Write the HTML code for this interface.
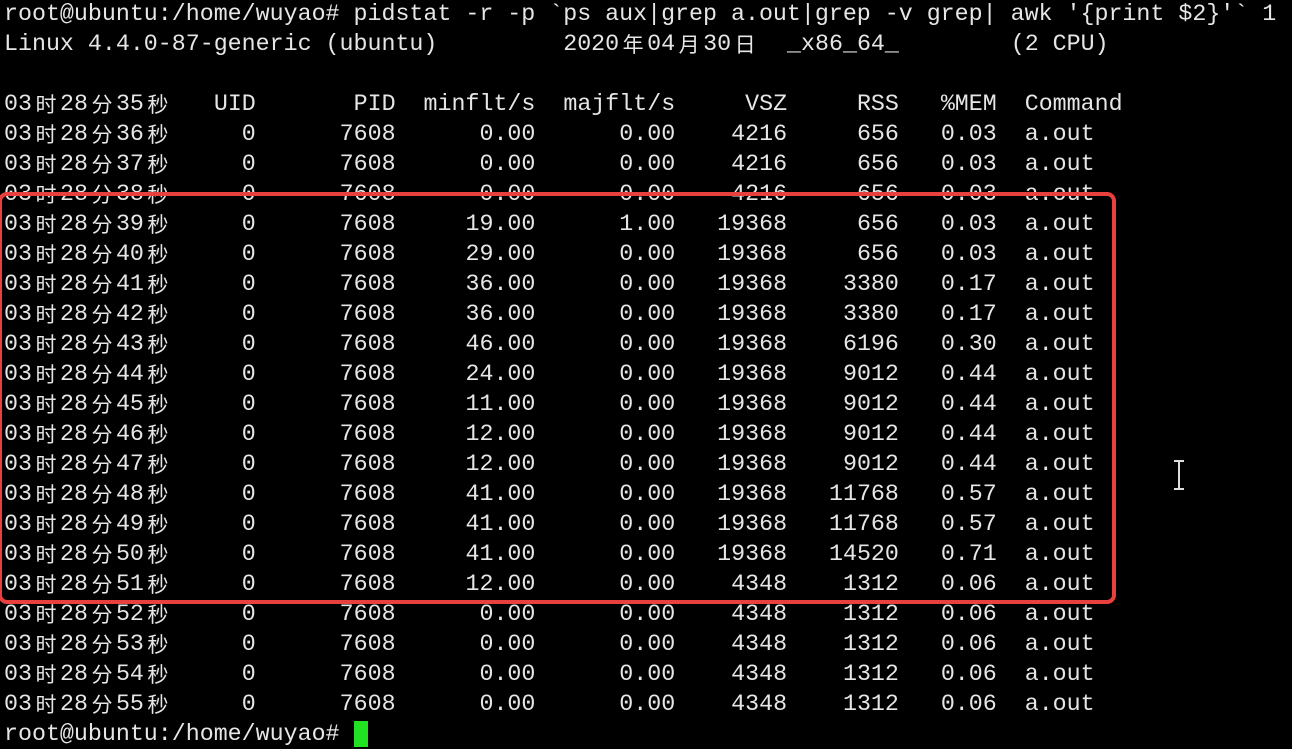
<!DOCTYPE html>
<html><head><meta charset="utf-8"><style>
html,body{margin:0;padding:0;background:#000;width:1292px;height:748px;overflow:hidden}
pre{margin:0;position:absolute;left:4px;top:-1px;font-family:"Liberation Mono",monospace;font-size:23.3px;line-height:30px;color:#e6e6e6;white-space:pre}
.c{display:inline-block;width:28px;height:30px;line-height:30px;vertical-align:top;text-align:center;font-family:"Noto Sans CJK SC",sans-serif;font-size:21px;overflow:hidden}
.box{position:absolute;left:-2px;top:192px;width:1110px;height:404px;border:4px solid #e8403f;border-radius:9px}
.cur{position:absolute;left:354px;top:721px;width:14px;height:26px;background:#22e022}
.ib{position:absolute;left:1172px;top:460px;width:14px;height:30px}
</style></head><body>
<pre>root@ubuntu:/home/wuyao# pidstat -r -p `ps aux|grep a.out|grep -v grep| awk '{print $2}'` 1
Linux 4.4.0-87-generic (ubuntu)         2020<span class="c">年</span>04<span class="c">月</span>30<span class="c">日</span>  _x86_64_        (2 CPU)

03<span class="c">时</span>28<span class="c">分</span>35<span class="c">秒</span>   UID       PID  minflt/s  majflt/s     VSZ     RSS   %MEM  Command
03<span class="c">时</span>28<span class="c">分</span>36<span class="c">秒</span>     0      7608      0.00      0.00    4216     656   0.03  a.out
03<span class="c">时</span>28<span class="c">分</span>37<span class="c">秒</span>     0      7608      0.00      0.00    4216     656   0.03  a.out
03<span class="c">时</span>28<span class="c">分</span>38<span class="c">秒</span>     0      7608      0.00      0.00    4216     656   0.03  a.out
03<span class="c">时</span>28<span class="c">分</span>39<span class="c">秒</span>     0      7608     19.00      1.00   19368     656   0.03  a.out
03<span class="c">时</span>28<span class="c">分</span>40<span class="c">秒</span>     0      7608     29.00      0.00   19368     656   0.03  a.out
03<span class="c">时</span>28<span class="c">分</span>41<span class="c">秒</span>     0      7608     36.00      0.00   19368    3380   0.17  a.out
03<span class="c">时</span>28<span class="c">分</span>42<span class="c">秒</span>     0      7608     36.00      0.00   19368    3380   0.17  a.out
03<span class="c">时</span>28<span class="c">分</span>43<span class="c">秒</span>     0      7608     46.00      0.00   19368    6196   0.30  a.out
03<span class="c">时</span>28<span class="c">分</span>44<span class="c">秒</span>     0      7608     24.00      0.00   19368    9012   0.44  a.out
03<span class="c">时</span>28<span class="c">分</span>45<span class="c">秒</span>     0      7608     11.00      0.00   19368    9012   0.44  a.out
03<span class="c">时</span>28<span class="c">分</span>46<span class="c">秒</span>     0      7608     12.00      0.00   19368    9012   0.44  a.out
03<span class="c">时</span>28<span class="c">分</span>47<span class="c">秒</span>     0      7608     12.00      0.00   19368    9012   0.44  a.out
03<span class="c">时</span>28<span class="c">分</span>48<span class="c">秒</span>     0      7608     41.00      0.00   19368   11768   0.57  a.out
03<span class="c">时</span>28<span class="c">分</span>49<span class="c">秒</span>     0      7608     41.00      0.00   19368   11768   0.57  a.out
03<span class="c">时</span>28<span class="c">分</span>50<span class="c">秒</span>     0      7608     41.00      0.00   19368   14520   0.71  a.out
03<span class="c">时</span>28<span class="c">分</span>51<span class="c">秒</span>     0      7608     12.00      0.00    4348    1312   0.06  a.out
03<span class="c">时</span>28<span class="c">分</span>52<span class="c">秒</span>     0      7608      0.00      0.00    4348    1312   0.06  a.out
03<span class="c">时</span>28<span class="c">分</span>53<span class="c">秒</span>     0      7608      0.00      0.00    4348    1312   0.06  a.out
03<span class="c">时</span>28<span class="c">分</span>54<span class="c">秒</span>     0      7608      0.00      0.00    4348    1312   0.06  a.out
03<span class="c">时</span>28<span class="c">分</span>55<span class="c">秒</span>     0      7608      0.00      0.00    4348    1312   0.06  a.out
root@ubuntu:/home/wuyao# </pre>
<div class="box"></div>
<div class="cur"></div>
<svg class="ib" viewBox="0 0 14 30"><path d="M2 1h10M7 1v28M2 29h10" stroke="#ddd" stroke-width="2" fill="none"/></svg>
</body></html>
